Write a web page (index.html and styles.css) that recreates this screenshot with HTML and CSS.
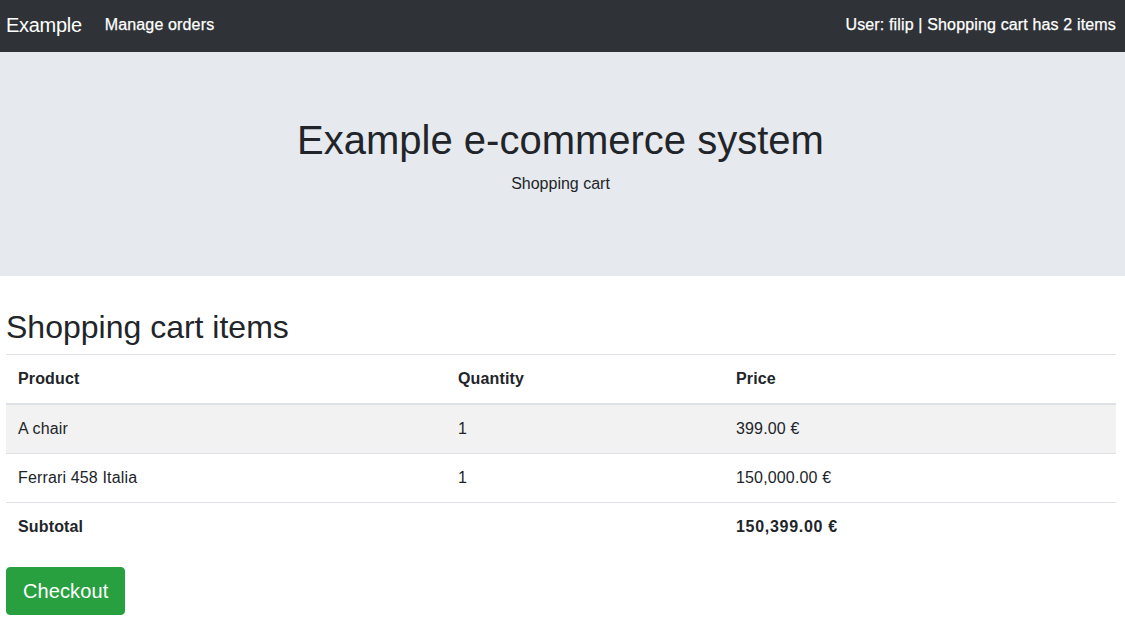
FILE: index.html
```html
<!DOCTYPE html>
<html>
<head>
<meta charset="utf-8">
<link rel="stylesheet" href="styles.css">
</head>
<body>
<nav class="navbar">
  <a class="brand" href="#">Example</a>
  <a class="nav-link" href="#">Manage orders</a>
  <span class="nav-text">User: filip | Shopping cart has 2 items</span>
</nav>
<header class="jumbotron">
  <h1 class="jumbo-title">Example e-commerce system</h1>
  <p class="jumbo-sub">Shopping cart</p>
</header>
<main class="content">
  <h2 class="section-title">Shopping cart items</h2>
  <table class="cart-table">
    <thead>
      <tr><th class="col-product">Product</th><th class="col-qty">Quantity</th><th>Price</th></tr>
    </thead>
    <tbody>
      <tr class="striped"><td>A chair</td><td>1</td><td>399.00 €</td></tr>
      <tr><td>Ferrari 458 Italia</td><td>1</td><td>150,000.00 €</td></tr>
      <tr class="total"><td>Subtotal</td><td></td><td class="total-price">150,399.00 €</td></tr>
    </tbody>
  </table>
  <button class="btn-checkout">Checkout</button>
</main>
</body>
</html>
```
FILE: styles.css
```css
* { box-sizing: border-box; }
html, body { margin: 0; padding: 0; }
body {
  font-family: "Liberation Sans", Arial, sans-serif;
  font-size: 16px;
  line-height: 1.5;
  color: #212529;
  background: #fff;
}
.navbar {
  display: flex;
  align-items: center;
  height: 52px;
  background: #2f3337;
  padding: 0 9px 2px 6px;
}
.brand {
  color: #fff;
  font-size: 20px;
  text-decoration: none;
  margin-right: 23px;
  letter-spacing: -0.3px;
}
.nav-link {
  color: #fff;
  text-decoration: none;
  font-size: 16px;
  letter-spacing: 0.15px;
  -webkit-text-stroke: 0.25px #fff;
}
.nav-text {
  margin-left: auto;
  color: #fff;
  font-size: 16px;
  letter-spacing: 0.15px;
  -webkit-text-stroke: 0.25px #fff;
}
.jumbotron {
  background: #e6e9ed;
  padding: 64px 34px 64px 30px;
  margin-bottom: 32px;
  text-align: center;
}
.jumbo-title {
  margin: 0 0 8px;
  font-size: 40px;
  font-weight: 400;
  line-height: 1.2;
}
.jumbo-sub {
  margin: 0 0 16px;
}
.content {
  padding: 0 9px 0 6px;
}
.section-title {
  margin: 0 0 8px;
  font-size: 32px;
  font-weight: 400;
  line-height: 1.2;
}
.cart-table {
  width: 100%;
  border-collapse: collapse;
  margin-bottom: 16px;
  letter-spacing: 0.15px;
}
.cart-table th, .cart-table td {
  padding: 12px;
  text-align: left;
  vertical-align: top;
  border-top: 1px solid #dee2e6;
}
.cart-table thead th {
  font-weight: 700;
  border-bottom: 2px solid #dee2e6;
}
.col-product { width: 440px; }
.col-qty { width: 278px; }
.cart-table tr.striped td { background: #f2f2f2; }
.cart-table tr.total td { font-weight: 700; }
.cart-table td.total-price { letter-spacing: 0.7px; }
.btn-checkout {
  font-family: inherit;
  font-size: 20px;
  line-height: 1.5;
  padding: 8px 16px;
  color: #fff;
  background: #28a03f;
  border: 1px solid #28a03f;
  border-radius: 4px;
  cursor: pointer;
  letter-spacing: 0.1px;
}
```
